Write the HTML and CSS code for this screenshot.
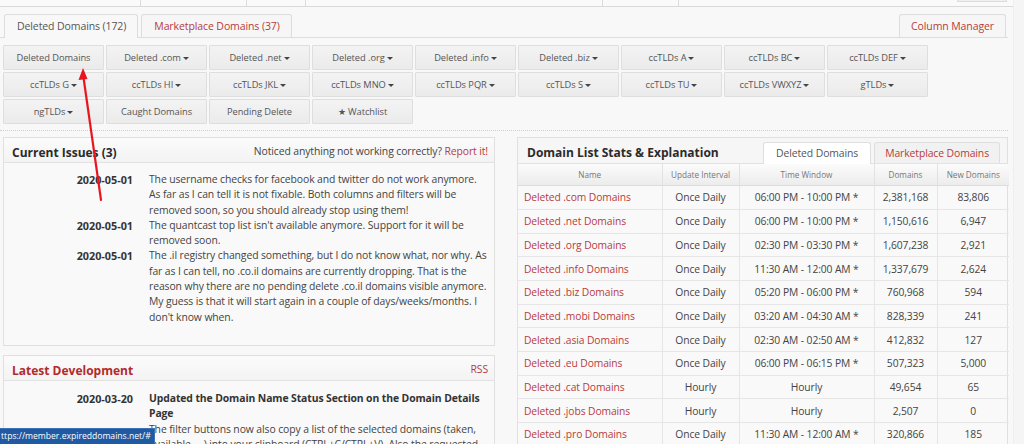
FILE: index.html
```html
<!DOCTYPE html>
<html>
<head>
<meta charset="utf-8">
<title>Expired Domains</title>
<link rel="stylesheet" href="styles.css">
</head>
<body>
<div class="topstrip">
  <div class="ts ts1"></div><div class="ts ts2"></div><div class="ts ts3"></div><div class="ts ts4"></div><div class="ts ts5"></div><div class="ts-space"></div><div class="ts-box"></div>
</div>

<div class="tabbar">
  <a class="tab active">Deleted Domains (172)</a>
  <a class="tab">Marketplace Domains (37)</a>
  <a class="tab tab-right">Column Manager</a>
</div>

<div class="btngrid">
  <a class="btn">Deleted Domains</a>
  <a class="btn">Deleted .com<span class="caret"></span></a>
  <a class="btn">Deleted .net<span class="caret"></span></a>
  <a class="btn">Deleted .org<span class="caret"></span></a>
  <a class="btn">Deleted .info<span class="caret"></span></a>
  <a class="btn">Deleted .biz<span class="caret"></span></a>
  <a class="btn">ccTLDs A<span class="caret"></span></a>
  <a class="btn">ccTLDs BC<span class="caret"></span></a>
  <a class="btn">ccTLDs DEF<span class="caret"></span></a>
  <a class="btn">ccTLDs G<span class="caret"></span></a>
  <a class="btn">ccTLDs HI<span class="caret"></span></a>
  <a class="btn">ccTLDs JKL<span class="caret"></span></a>
  <a class="btn">ccTLDs MNO<span class="caret"></span></a>
  <a class="btn">ccTLDs PQR<span class="caret"></span></a>
  <a class="btn">ccTLDs S<span class="caret"></span></a>
  <a class="btn">ccTLDs TU<span class="caret"></span></a>
  <a class="btn">ccTLDs VWXYZ<span class="caret"></span></a>
  <a class="btn">gTLDs<span class="caret"></span></a>
  <a class="btn">ngTLDs<span class="caret"></span></a>
  <a class="btn">Caught Domains</a>
  <a class="btn">Pending Delete</a>
  <a class="btn">&#9733; Watchlist</a>
</div>

<div class="dotted"></div>

<div class="columns">
  <div class="leftcol">
    <div class="panel panel-issues">
      <div class="panel-head">
        <h3 class="panel-title">Current Issues (3)</h3>
        <span class="head-note">Noticed anything not working correctly? <a class="red">Report it!</a></span>
      </div>
      <div class="panel-body">
        <div class="entries">
          <div class="date">2020-05-01</div>
          <div class="entry">The username checks for facebook and twitter do not work anymore.<br>As far as I can tell it is not fixable. Both columns and filters will be<br>removed soon, so you should already stop using them!</div>
          <div class="date">2020-05-01</div>
          <div class="entry">The quantcast top list isn't available anymore. Support for it will be<br>removed soon.</div>
          <div class="date">2020-05-01</div>
          <div class="entry">The .il registry changed something, but I do not know what, nor why. As<br>far as I can tell, no .co.il domains are currently dropping. That is the<br>reason why there are no pending delete .co.il domains visible anymore.<br>My guess is that it will start again in a couple of days/weeks/months. I<br>don't know when.</div>
        </div>
      </div>
    </div>

    <div class="panel panel-dev">
      <div class="panel-head">
        <h3 class="panel-title red-title">Latest Development</h3>
        <a class="red rss">RSS</a>
      </div>
      <div class="panel-body">
        <div class="entries">
          <div class="date">2020-03-20</div>
          <div class="entry"><strong>Updated the Domain Name Status Section on the Domain Details<br>Page</strong><br>The filter buttons now also copy a list of the selected domains (taken,<br>available, ...) into your clipboard (CTRL+C/CTRL+V). Also the requested<br>status is now shown.</div>
        </div>
      </div>
    </div>
  </div>

  <div class="rightcol">
    <div class="panel panel-stats">
      <div class="panel-head stats-head">
        <h3 class="panel-title">Domain List Stats &amp; Explanation</h3>
        <div class="mini-tabs">
          <a class="mtab active">Deleted Domains</a>
          <a class="mtab">Marketplace Domains</a>
        </div>
      </div>
      <table class="stats">
        <thead>
          <tr><th class="c1">Name</th><th class="c2">Update Interval</th><th class="c3">Time Window</th><th class="c4">Domains</th><th class="c5">New Domains</th></tr>
        </thead>
        <tbody>
          <tr><td><a class="red">Deleted .com Domains</a></td><td>Once Daily</td><td>06:00 PM - 10:00 PM *</td><td>2,381,168</td><td>83,806</td></tr>
          <tr><td><a class="red">Deleted .net Domains</a></td><td>Once Daily</td><td>06:00 PM - 10:00 PM *</td><td>1,150,616</td><td>6,947</td></tr>
          <tr><td><a class="red">Deleted .org Domains</a></td><td>Once Daily</td><td>02:30 PM - 03:30 PM *</td><td>1,607,238</td><td>2,921</td></tr>
          <tr><td><a class="red">Deleted .info Domains</a></td><td>Once Daily</td><td>11:30 AM - 12:00 AM *</td><td>1,337,679</td><td>2,624</td></tr>
          <tr><td><a class="red">Deleted .biz Domains</a></td><td>Once Daily</td><td>05:20 PM - 06:00 PM *</td><td>760,968</td><td>594</td></tr>
          <tr><td><a class="red">Deleted .mobi Domains</a></td><td>Once Daily</td><td>03:20 AM - 04:30 AM *</td><td>828,339</td><td>241</td></tr>
          <tr><td><a class="red">Deleted .asia Domains</a></td><td>Once Daily</td><td>02:30 AM - 02:50 AM *</td><td>412,832</td><td>127</td></tr>
          <tr><td><a class="red">Deleted .eu Domains</a></td><td>Once Daily</td><td>06:00 PM - 06:15 PM *</td><td>507,323</td><td>5,000</td></tr>
          <tr><td><a class="red">Deleted .cat Domains</a></td><td>Hourly</td><td>Hourly</td><td>49,654</td><td>65</td></tr>
          <tr><td><a class="red">Deleted .jobs Domains</a></td><td>Hourly</td><td>Hourly</td><td>2,507</td><td>0</td></tr>
          <tr><td><a class="red">Deleted .pro Domains</a></td><td>Once Daily</td><td>11:30 AM - 12:00 AM *</td><td>320,866</td><td>185</td></tr>
        </tbody>
      </table>
    </div>
  </div>
</div>

<div class="scrolltrack"></div>

<svg class="arrow" width="40" height="150" viewBox="0 0 40 150" aria-hidden="true">
  <line x1="13" y1="14" x2="31" y2="140" stroke="#e8161c" stroke-width="2.2" stroke-linecap="round"/>
  <polygon points="13,8 8.5,20 17.5,19" fill="#e8161c"/>
</svg>

<div class="statusbar">ttps://member.expireddomains.net/#</div>
</body>
</html>
```

FILE: styles.css
```css
* { box-sizing: border-box; }
html, body { margin: 0; padding: 0; }
body {
  width: 1024px;
  height: 444px;
  overflow: hidden;
  position: relative;
  background: #f8f8f8;
  font-family: "Open Sans", "Liberation Sans", sans-serif;
  font-size: 10.4px;
  letter-spacing: -0.1px;
  color: #333;
}
a { text-decoration: none; cursor: pointer; }
.red { color: #b83b3b; }

/* top strip (bottom of the site header) */
.topstrip { display: flex; height: 7px; border-bottom: 1px solid #dadada; background: #fafafa; }
.ts { height: 6px; border-right: 1px solid #dadada; }
.ts1 { width: 141px; }
.ts2 { width: 106px; }
.ts3 { width: 59px; }
.ts4 { width: 297px; }
.ts5 { width: 76px; }
.ts-space { width: 278px; }
.ts-box { width: 50px; height: 2px; border: 1px solid #dcdcdc; border-top: none; background: #f0f0f0; }

/* main tabs */
.tabbar {
  display: flex;
  align-items: flex-end;
  width: 1008px;
  height: 31px;
  padding: 0 2px 0 4px;
  border-bottom: 1px solid #dddddd;
}
.tab {
  height: 23px;
  line-height: 22px;
  padding: 0 11px 0 12px;
  margin-right: 3px;
  border: 1px solid #dddddd;
  border-bottom: none;
  border-radius: 3px 3px 0 0;
  background: #f6f6f6;
  color: #b83b3b;
  font-size: 10.5px;
}
.tab.active { color: #555; background: #f8f8f8; height: 24px; margin-bottom: -1px; }
.tab-right { margin-left: auto; margin-right: 0; padding: 0 11px; }

/* button grid */
.btngrid {
  display: grid;
  grid-template-columns: repeat(9, 101px);
  grid-auto-rows: 25px;
  gap: 2px;
  padding-left: 3px;
  margin-top: 7px;
}
.btn {
  display: flex;
  align-items: center;
  justify-content: center;
  border: 1px solid #dedede;
  border-radius: 1px;
  background: linear-gradient(#f3f3f3, #ebebeb);
  color: #555;
  font-size: 9.3px;
  letter-spacing: -0.05px;
  white-space: nowrap;
}
.caret {
  display: inline-block;
  width: 0; height: 0;
  margin-left: 2px;
  margin-top: 1px;
  border-left: 3px solid transparent;
  border-right: 3px solid transparent;
  border-top: 3.5px solid #444;
}

.dotted { width: 1008px; margin-top: 6px; border-top: 1px dotted #cfcfcf; }

/* columns */
.columns { display: flex; align-items: flex-start; gap: 22px; padding-left: 3px; margin-top: 6px; }
.leftcol { width: 492px; display: flex; flex-direction: column; gap: 9px; }
.rightcol { width: 491px; }

.panel { border: 1px solid #e0e0e0; background: #f9f9f9; }
.panel-head {
  display: flex;
  align-items: center;
  justify-content: space-between;
  height: 25px;
  padding: 0 6px 0 8px;
  border-bottom: 1px solid #e2e2e2;
  background: linear-gradient(#fbfbfb, #f3f3f3);
}
.panel-title { margin: 0; font-size: 12px; font-weight: 700; letter-spacing: 0; color: #2b2b2b; padding-top: 5px; }
.red-title { color: #b22a2a; }
.head-note { color: #444; font-size: 10.4px; padding-top: 1px; }
.rss { font-size: 10.4px; padding-top: 1px; }

.panel-issues { height: 209px; }
.panel-body { padding: 9px 1px 8px 0; }
.panel-dev .panel-body { padding-top: 10px; }
.entries { display: grid; grid-template-columns: 129px 1fr; column-gap: 16px; line-height: 15.3px; }
.date { text-align: right; font-weight: 700; color: #333; font-size: 10.8px; letter-spacing: 0; }
.entry { color: #444; white-space: nowrap; }
.entry strong { color: #333; }

/* stats panel */
.stats-head { align-items: stretch; height: 26px; padding: 0 7px 0 9px; background: #f6f6f6; }
.stats-head .panel-title { align-self: center; padding-top: 4px; }
.mini-tabs { display: flex; align-items: flex-end; gap: 3px; }
.mtab {
  height: 21px;
  line-height: 20px;
  padding: 0 10px;
  border: 1px solid #dedede;
  border-bottom: none;
  border-radius: 3px 3px 0 0;
  background: #f1f1f1;
  color: #b83b3b;
  font-size: 10.4px;
}
.mtab.active { background: #fff; color: #555; height: 22px; margin-bottom: -1px; padding: 0 12px; }

.stats { width: 100%; border-collapse: collapse; table-layout: fixed; }
.stats th {
  height: 21px;
  font-size: 8.2px;
  font-weight: 400;
  letter-spacing: 0;
  color: #777;
  border-right: 1px solid #e2e2e2;
  border-bottom: 1px solid #dcdcdc;
  background: linear-gradient(#fbfbfb, #ececec);
  padding: 0;
}
.stats tbody tr:first-child td { height: 24.5px; }
.stats td {
  height: 23.67px;
  padding: 0 6px;
  text-align: center;
  color: #444;
  font-size: 10.3px;
  border-right: 1px solid #e6e6e6;
  border-bottom: 1px solid #e6e6e6;
  white-space: nowrap;
}
.stats td:first-child { text-align: left; }
.stats th:last-child, .stats td:last-child { border-right: none; }
.c1 { width: 144px; }
.c2 { width: 77px; }
.c3 { width: 135px; }
.c4 { width: 63px; }
.c5 { width: 72px; }

.scrolltrack { position: absolute; top: 0; right: 0; width: 11px; height: 444px; background: #f5f5f5; border-left: 1px solid #efefef; }

/* overlays */
.arrow { position: absolute; left: 70px; top: 60px; }
.statusbar {
  position: absolute;
  left: 0;
  bottom: 0;
  width: 155px;
  height: 16px;
  line-height: 15px;
  padding-left: 1px;
  background: #1f5aa3;
  border-top: 1px solid #3d72b5;
  border-right: 1px solid #3d72b5;
  color: #fff;
  font-size: 8.6px;
  letter-spacing: 0;
  white-space: nowrap;
  overflow: hidden;
}
```
